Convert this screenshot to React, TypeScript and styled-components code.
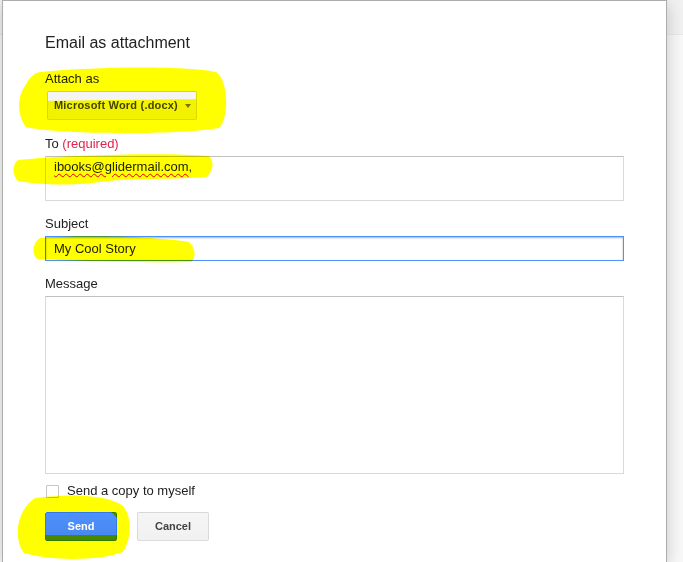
import React from "react";
import styled, { createGlobalStyle } from "styled-components";

const Global = createGlobalStyle`
  html, body, #root { height: 100%; }
  body {
    margin: 0;
    overflow: hidden;
    font-family: "Liberation Sans", Arial, sans-serif;
    color: #222;
  }
`;

const Page = styled.div`
  position: relative;
  isolation: isolate;
  width: 100%;
  height: 100%;
  overflow: hidden;
  display: flex;
  flex-direction: column;
  background: #f8f8f8;
`;

const Toolbar = styled.div`
  height: 34px;
  flex: none;
  background: #f1f1f1;
  border-bottom: 1px solid #e8e8e8;
`;

const Workspace = styled.div`
  flex: 1;
  background: #f8f8f8;
`;

const Dialog = styled.div`
  position: absolute;
  left: 2px;
  top: 0;
  bottom: 0;
  z-index: 1;
  width: 665px;
  box-sizing: border-box;
  background: #fff;
  border: 1px solid #acacac;
  border-bottom: none;
  box-shadow: 0 4px 16px rgba(0, 0, 0, 0.2);
  padding: 32px 42px 0;
  display: flex;
  flex-direction: column;
  align-items: flex-start;
`;

const Title = styled.h2`
  margin: 0;
  font-size: 16px;
  line-height: 20px;
  font-weight: normal;
  color: #222;
`;

const FieldLabel = styled.div<{ $gap: number }>`
  margin-top: ${(p) => p.$gap}px;
  font-size: 13px;
  line-height: 16px;
  color: #222;
`;

const Required = styled.span`
  color: #e0224d;
`;

const SelectButton = styled.div`
  margin-top: 4px;
  margin-left: 2px;
  width: 150px;
  height: 29px;
  box-sizing: border-box;
  display: flex;
  align-items: center;
  padding: 0 5px 0 6px;
  background: linear-gradient(#f5f5f5, #f1f1f1);
  border: 1px solid rgba(0, 0, 0, 0.1);
  border-radius: 2px;
  font-size: 11px;
  font-weight: bold;
  letter-spacing: 0.2px;
  line-height: 27px;
  color: #444;
`;

const Caret = styled.span`
  margin-left: auto;
  width: 0;
  height: 0;
  border-left: 3.5px solid transparent;
  border-right: 3.5px solid transparent;
  border-top: 4px solid #777;
`;

const TextBox = styled.div<{ $height: number; $focused?: boolean }>`
  margin-top: 4px;
  width: 579px;
  height: ${(p) => p.$height}px;
  box-sizing: border-box;
  padding: ${(p) => (p.$focused ? "0 8px" : "2px 8px")};
  font-size: 13px;
  line-height: ${(p) => (p.$focused ? "23px" : "16px")};
  color: #222;
  background: #fff;
  border: 1px solid ${(p) => (p.$focused ? "#4d90fe" : "#d9d9d9")};
  border-top-color: ${(p) => (p.$focused ? "#4d90fe" : "#c0c0c0")};
  box-shadow: ${(p) => (p.$focused ? "inset 0 1px 2px rgba(0,0,0,0.3)" : "none")};
`;

const Misspelled = styled.span`
  text-decoration: underline wavy #e00000;
  text-decoration-thickness: 1px;
  text-underline-offset: 2px;
`;

const CheckRow = styled.label`
  margin-top: 9px;
  display: flex;
  align-items: center;
  font-size: 13px;
  line-height: 16px;
  color: #222;
`;

const CheckBox = styled.span`
  width: 13px;
  height: 13px;
  margin-left: 1px;
  box-sizing: border-box;
  border: 1px solid #c6c6c6;
  border-radius: 1px;
  background: #fff;
  margin-right: 8px;
`;

const ButtonRow = styled.div`
  margin-top: 13px;
  display: flex;
  gap: 20px;
`;

const Button = styled.div<{ $primary?: boolean }>`
  width: 72px;
  height: 29px;
  box-sizing: border-box;
  border-radius: 2px;
  border: 1px solid ${(p) => (p.$primary ? "#3079ed" : "rgba(0,0,0,0.1)")};
  background: ${(p) => (p.$primary ? "linear-gradient(#4d90fe, #4787ed)" : "linear-gradient(#f5f5f5, #f1f1f1)")};
  color: ${(p) => (p.$primary ? "#fff" : "#444")};
  font-size: 11px;
  font-weight: bold;
  line-height: 27px;
  text-align: center;
`;

const Highlights = styled.svg`
  position: absolute;
  left: 0;
  top: 0;
  z-index: 2;
  pointer-events: none;
  mix-blend-mode: multiply;
`;

export default function App() {
  return (
    <>
      <Global />
      <Page>
        <Toolbar />
        <Workspace />
        <Dialog>
          <Title>Email as attachment</Title>
          <FieldLabel $gap={18}>Attach as</FieldLabel>
          <SelectButton>
            Microsoft Word (.docx)
            <Caret />
          </SelectButton>
          <FieldLabel $gap={16}>
            To <Required>(required)</Required>
          </FieldLabel>
          <TextBox $height={45}>
            <Misspelled>ibooks@glidermail.com</Misspelled>,
          </TextBox>
          <FieldLabel $gap={15}>Subject</FieldLabel>
          <TextBox $height={25} $focused>
            My Cool Story
          </TextBox>
          <FieldLabel $gap={15}>Message</FieldLabel>
          <TextBox $height={178} />
          <CheckRow>
            <CheckBox />
            Send a copy to myself
          </CheckRow>
          <ButtonRow>
            <Button $primary>Send</Button>
            <Button>Cancel</Button>
          </ButtonRow>
        </Dialog>
        <Highlights width="683" height="562" viewBox="0 0 683 562">
          <g fill="#ffff00" fillRule="evenodd">
            <path d="M 40 72 C 100 66, 190 66, 216 72 C 229 80, 229 120, 219 128 C 180 135, 60 135, 26 127 C 17 116, 17 97, 25 86 C 29 78, 34 73, 40 72 Z M 48 92 L 196 92 L 196 99 C 150 100, 90 100, 48 101 Z" />
            <path d="M 18 160 C 60 155, 170 152, 209 156 C 215 162, 213 172, 206 177 C 160 180, 130 178, 100 182 C 70 186, 40 185, 18 181 C 12 175, 12 165, 18 160 Z" />
            <path d="M 40 238 C 80 235, 150 236, 189 242 C 196 248, 196 258, 191 262 C 150 263, 80 261, 37 259 C 32 254, 32 243, 40 238 Z" />
            <path d="M 35 498 C 70 493, 110 495, 123 506 C 133 518, 131 540, 123 552 C 100 561, 50 561, 24 553 C 14 540, 15 512, 35 498 Z M 45 512 L 111 512 L 117 518 L 117 535 L 45 535 Z" />
          </g>
        </Highlights>
      </Page>
    </>
  );
}
